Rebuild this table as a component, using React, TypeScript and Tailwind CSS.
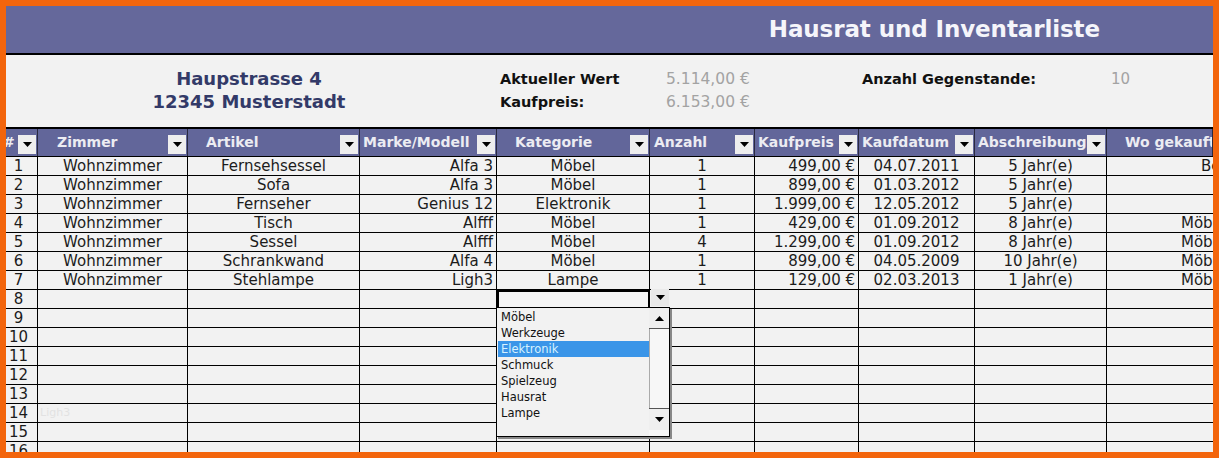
import { ReactNode } from "react";

const COLS =
  "grid grid-cols-[32px_150px_172px_137px_153px_105px_104px_116px_132px_1fr]";

type Row = {
  zimmer: string;
  artikel: string;
  marke: string;
  kategorie: string;
  anzahl: string;
  preis: string;
  datum: string;
  abschr: string;
  wo: string;
  woPad: string;
};

const rows: Row[] = [
  { zimmer: "Wohnzimmer", artikel: "Fernsehsessel", marke: "Alfa 3", kategorie: "Möbel", anzahl: "1", preis: "499,00 €", datum: "04.07.2011", abschr: "5 Jahr(e)", wo: "Bett", woPad: "pl-[94px]" },
  { zimmer: "Wohnzimmer", artikel: "Sofa", marke: "Alfa 3", kategorie: "Möbel", anzahl: "1", preis: "899,00 €", datum: "01.03.2012", abschr: "5 Jahr(e)", wo: "", woPad: "" },
  { zimmer: "Wohnzimmer", artikel: "Fernseher", marke: "Genius 12", kategorie: "Elektronik", anzahl: "1", preis: "1.999,00 €", datum: "12.05.2012", abschr: "5 Jahr(e)", wo: "", woPad: "" },
  { zimmer: "Wohnzimmer", artikel: "Tisch", marke: "Alfff", kategorie: "Möbel", anzahl: "1", preis: "429,00 €", datum: "01.09.2012", abschr: "8 Jahr(e)", wo: "Möbelhaus", woPad: "pl-[74px]" },
  { zimmer: "Wohnzimmer", artikel: "Sessel", marke: "Alfff", kategorie: "Möbel", anzahl: "4", preis: "1.299,00 €", datum: "01.09.2012", abschr: "8 Jahr(e)", wo: "Möbelhaus", woPad: "pl-[74px]" },
  { zimmer: "Wohnzimmer", artikel: "Schrankwand", marke: "Alfa 4", kategorie: "Möbel", anzahl: "1", preis: "899,00 €", datum: "04.05.2009", abschr: "10 Jahr(e)", wo: "Möbelhaus", woPad: "pl-[74px]" },
  { zimmer: "Wohnzimmer", artikel: "Stehlampe", marke: "Ligh3", kategorie: "Lampe", anzahl: "1", preis: "129,00 €", datum: "02.03.2013", abschr: "1 Jahr(e)", wo: "Möbelhaus", woPad: "pl-[74px]" },
];

const headers = [
  { label: "#", pad: "pl-0 -ml-[3px]" },
  { label: "Zimmer", pad: "pl-[19px]" },
  { label: "Artikel", pad: "pl-[18px]" },
  { label: "Marke/Modell", pad: "pl-[3px]" },
  { label: "Kategorie", pad: "pl-[18px]" },
  { label: "Anzahl", pad: "pl-[4px]" },
  { label: "Kaufpreis", pad: "pl-[3px]" },
  { label: "Kaufdatum", pad: "pl-[3px]" },
  { label: "Abschreibung", pad: "pl-[3px]" },
  { label: "Wo gekauft", pad: "pl-[18px]" },
];

const categories = ["Möbel", "Werkzeuge", "Elektronik", "Schmuck", "Spielzeug", "Hausrat", "Lampe"];

function Tri({ up = false, className = "" }: { up?: boolean; className?: string }) {
  return (
    <svg width="9" height="5" viewBox="0 0 9 5" className={className}>
      <path d={up ? "M0 5 L4.5 0 L9 5 Z" : "M0 0 L9 0 L4.5 5 Z"} fill="#000" />
    </svg>
  );
}

function FilterButton() {
  return (
    <div className="ml-auto mr-[1px] mb-[2px] self-end w-[18px] h-[19px] bg-[#eeeeee] flex items-center justify-center shrink-0">
      <Tri />
    </div>
  );
}

function Cell({ children, className = "" }: { children?: ReactNode; className?: string }) {
  return (
    <div className={`h-[19px] border-r border-b border-black leading-[18px] whitespace-nowrap overflow-hidden ${className}`}>
      {children}
    </div>
  );
}

function DataRow({ n, r }: { n: number; r?: Row }) {
  return (
    <div className={COLS}>
      <Cell className="text-center pr-[6px]">{n}</Cell>
      <Cell className="text-center">
        {r ? r.zimmer : n === 14 ? <span className="text-[11px] text-[#e2e2e2] pl-[2px] float-left">Ligh3</span> : null}
      </Cell>
      <Cell className="text-center">{r?.artikel}</Cell>
      <Cell className="text-right pr-[3px]">{r?.marke}</Cell>
      {n === 8 ? (
        <div className="h-[19px] border-b border-black relative">
          <div className="absolute inset-x-0 top-0 bottom-[-1px] border-[2px] border-double border-black bg-[#f5f5f5]" />
        </div>
      ) : (
        <Cell className="text-center">{r?.kategorie}</Cell>
      )}
      <Cell className="text-center">{r?.anzahl}</Cell>
      <Cell className="text-right pr-[3px]">{r?.preis}</Cell>
      <Cell className="text-center">{r?.datum}</Cell>
      <Cell className="text-center">{r?.abschr}</Cell>
      <Cell className={`border-r-0 ${r?.woPad ?? ""}`}>{r?.wo}</Cell>
    </div>
  );
}

export default function App() {
  const emptyRows = Array.from({ length: 9 }, (_, i) => i + 8);
  return (
    <div className="w-[1219px] h-[458px] bg-[#f3650c] p-[6px] font-['DejaVu_Sans',sans-serif]">
      <div className="w-full h-full bg-[#f2f2f2] overflow-hidden flex flex-col">
        {/* title bar */}
        <div className="h-[49px] shrink-0 bg-[#65689b] border-b-2 border-black flex items-center justify-end pr-[113px]">
          <span className="text-[23px] font-bold text-[#f5f5fa] tracking-[-0.1px]">Hausrat und Inventarliste</span>
        </div>

        {/* info */}
        <div className="h-[72px] shrink-0 flex pt-[12px]">
          <div className="w-[494px] pr-[8px] text-center text-[18px] font-bold text-[#333a68] leading-[23px]">
            <div>Haupstrasse 4</div>
            <div>12345 Musterstadt</div>
          </div>
          <div className="w-[166px] text-[14.5px] font-bold text-[#111] leading-[23px] pt-[1px]">
            <div>Aktueller Wert</div>
            <div>Kaufpreis:</div>
          </div>
          <div className="w-[196px] text-[15.5px] text-[#a3a3a3] leading-[23px] pt-[1px]">
            <div>5.114,00 €</div>
            <div>6.153,00 €</div>
          </div>
          <div className="w-[249px] text-[14.5px] font-bold text-[#111] leading-[23px] pt-[1px]">Anzahl Gegenstande:</div>
          <div className="text-[15px] text-[#a3a3a3] leading-[23px] pt-[1px]">10</div>
        </div>

        {/* table */}
        <div className="relative text-[15px] text-[#1c1c1c]">
          <div className={`${COLS} h-[30px] bg-[#62669a] border-t-2 border-b border-black`}>
            {headers.map((h) => (
              <div key={h.label} className={`flex items-center border-r border-[#2a2a40] overflow-hidden whitespace-nowrap ${h.pad}`}>
                <span className="text-[14px] font-bold text-[#ececf2]">{h.label}</span>
                {h.label !== "Wo gekauft" && <FilterButton />}
              </div>
            ))}
          </div>

          {rows.map((r, i) => (
            <DataRow key={i} n={i + 1} r={r} />
          ))}
          {emptyRows.map((n) => (
            <DataRow key={n} n={n} />
          ))}

          {/* validation dropdown */}
          <div className="absolute left-[645px] top-[162px] w-[18px] h-[17px] bg-[#e9e9e9] flex items-center justify-center">
            <Tri />
          </div>
          <div className="absolute left-[490px] top-[180px] w-[174px] h-[130px] bg-[#f2f2f2] border border-black flex shadow-[2px_2px_0_#888]">
            <div className="flex-1 pt-[1px] pl-[1px] text-[11.5px] leading-[16px] text-[#111]">
              {categories.map((c) => (
                <div
                  key={c}
                  className={c === "Elektronik" ? "bg-[#3a95e8] text-[#d6f2ff] pl-[3px]" : "pl-[3px]"}
                >
                  {c}
                </div>
              ))}
            </div>
            <div className="w-[20px] flex flex-col bg-[#f7f7f7]">
              <div className="h-[21px] bg-[#efefef] border-b border-[#555] flex items-center justify-center">
                <Tri up />
              </div>
              <div className="flex-1 border-l border-[#aaa]" />
              <div className="h-[22px] bg-[#efefef] border-t border-[#555] flex items-center justify-center">
                <Tri />
              </div>
              <div className="h-[6px]" />
            </div>
          </div>
        </div>
      </div>
    </div>
  );
}
